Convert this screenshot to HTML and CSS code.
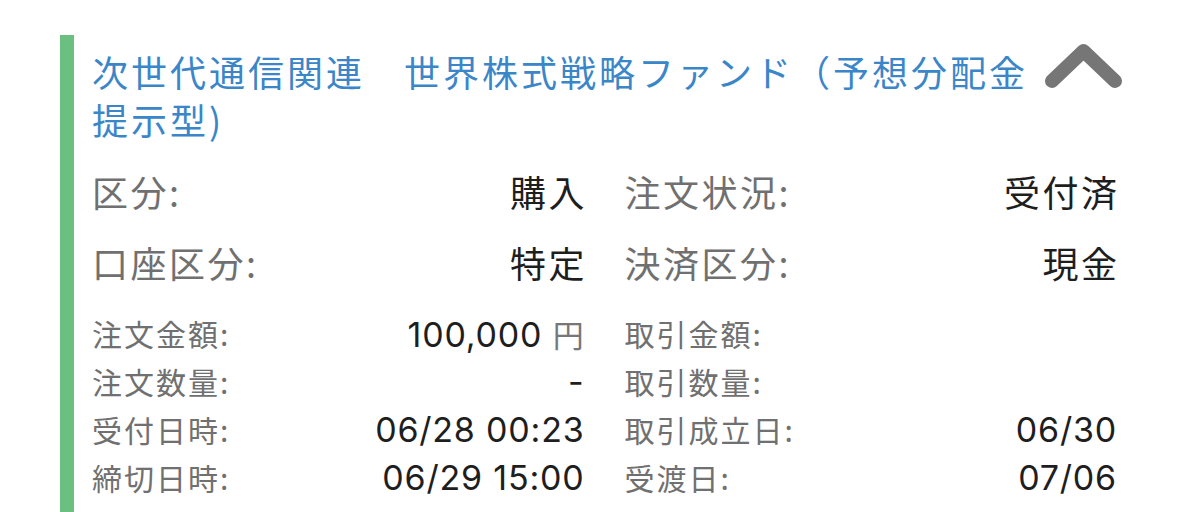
FILE: index.html
```html
<!DOCTYPE html>
<html lang="ja">
<head>
    <meta charset="UTF-8">
    <meta name="viewport" content="width=device-width, initial-scale=1.0">
    <title>注文照会</title>
    <link rel="stylesheet" href="styles.css">
</head>
<body>
    <div class="order-card">
        <div class="order-header">
            <div class="fund-name">次世代通信関連　世界株式戦略ファンド（予想分配金提示型)</div>
            <svg class="toggle-icon" width="80" height="46" viewBox="0 0 80 46">
                <polyline points="8,37 39.5,7 71,37" fill="none" stroke="#767676" stroke-width="14" stroke-linecap="round" stroke-linejoin="round"/>
            </svg>
        </div>

        <div class="info-grid main-info">
            <div class="field">
                <span class="label">区分:</span>
                <span class="value">購入</span>
            </div>
            <div class="field">
                <span class="label">注文状況:</span>
                <span class="value">受付済</span>
            </div>
            <div class="field">
                <span class="label">口座区分:</span>
                <span class="value">特定</span>
            </div>
            <div class="field">
                <span class="label">決済区分:</span>
                <span class="value">現金</span>
            </div>
        </div>

        <div class="info-grid detail-info">
            <div class="field">
                <span class="label">注文金額:</span>
                <span class="value num">100,000 <span class="unit">円</span></span>
            </div>
            <div class="field">
                <span class="label">取引金額:</span>
                <span class="value num"></span>
            </div>
            <div class="field">
                <span class="label">注文数量:</span>
                <span class="value num">-</span>
            </div>
            <div class="field">
                <span class="label">取引数量:</span>
                <span class="value num"></span>
            </div>
            <div class="field">
                <span class="label">受付日時:</span>
                <span class="value num">06/28 00:23</span>
            </div>
            <div class="field">
                <span class="label">取引成立日:</span>
                <span class="value num">06/30</span>
            </div>
            <div class="field">
                <span class="label">締切日時:</span>
                <span class="value num">06/29 15:00</span>
            </div>
            <div class="field">
                <span class="label">受渡日:</span>
                <span class="value num">07/06</span>
            </div>
        </div>
    </div>
</body>
</html>
```

FILE: styles.css
```css
* {
    margin: 0;
    padding: 0;
    box-sizing: border-box;
}

body {
    background-color: #fff;
    font-family: "Noto Sans CJK JP", "Noto Sans", sans-serif;
    color: #1e1e1e;
    overflow: hidden;
}

/* Order card with green status bar on the left */
.order-card {
    margin: 35px 0 0 60px;
    min-height: 477px;
    border-left: 14px solid #6bbf80;
    padding: 12px 62px 0 18px;
}

.order-header {
    display: flex;
    align-items: flex-start;
}

.fund-name {
    flex: 1;
    font-size: 36px;
    line-height: 48px;
    letter-spacing: 3px;
    color: #3a86c8;
    padding-right: 6px;
}

.toggle-icon {
    flex-shrink: 0;
    margin: -3px -7px 0 0;
}

/* Two-column label / value grid */
.info-grid {
    display: grid;
    grid-template-columns: 1fr 1fr;
    column-gap: 40px;
}

.field {
    display: flex;
    justify-content: space-between;
    align-items: center;
    white-space: nowrap;
}

.label {
    color: #707070;
}

.main-info {
    margin-top: 12px;
}

.main-info .field {
    height: 71px;
    font-size: 36px;
    letter-spacing: 2.5px;
}

.main-info .value {
    margin-right: -2.5px;
}

.detail-info {
    margin-top: 12px;
}

.detail-info .field {
    height: 48px;
}

.detail-info .label {
    font-size: 30px;
    letter-spacing: 2px;
}

.value.num {
    font-family: Inter, "Noto Sans CJK JP", sans-serif;
    font-size: 34px;
    letter-spacing: 0.8px;
    color: #1e1e1e;
}

.unit {
    font-family: "Noto Sans CJK JP", sans-serif;
    font-size: 31px;
    color: #777;
}
```
